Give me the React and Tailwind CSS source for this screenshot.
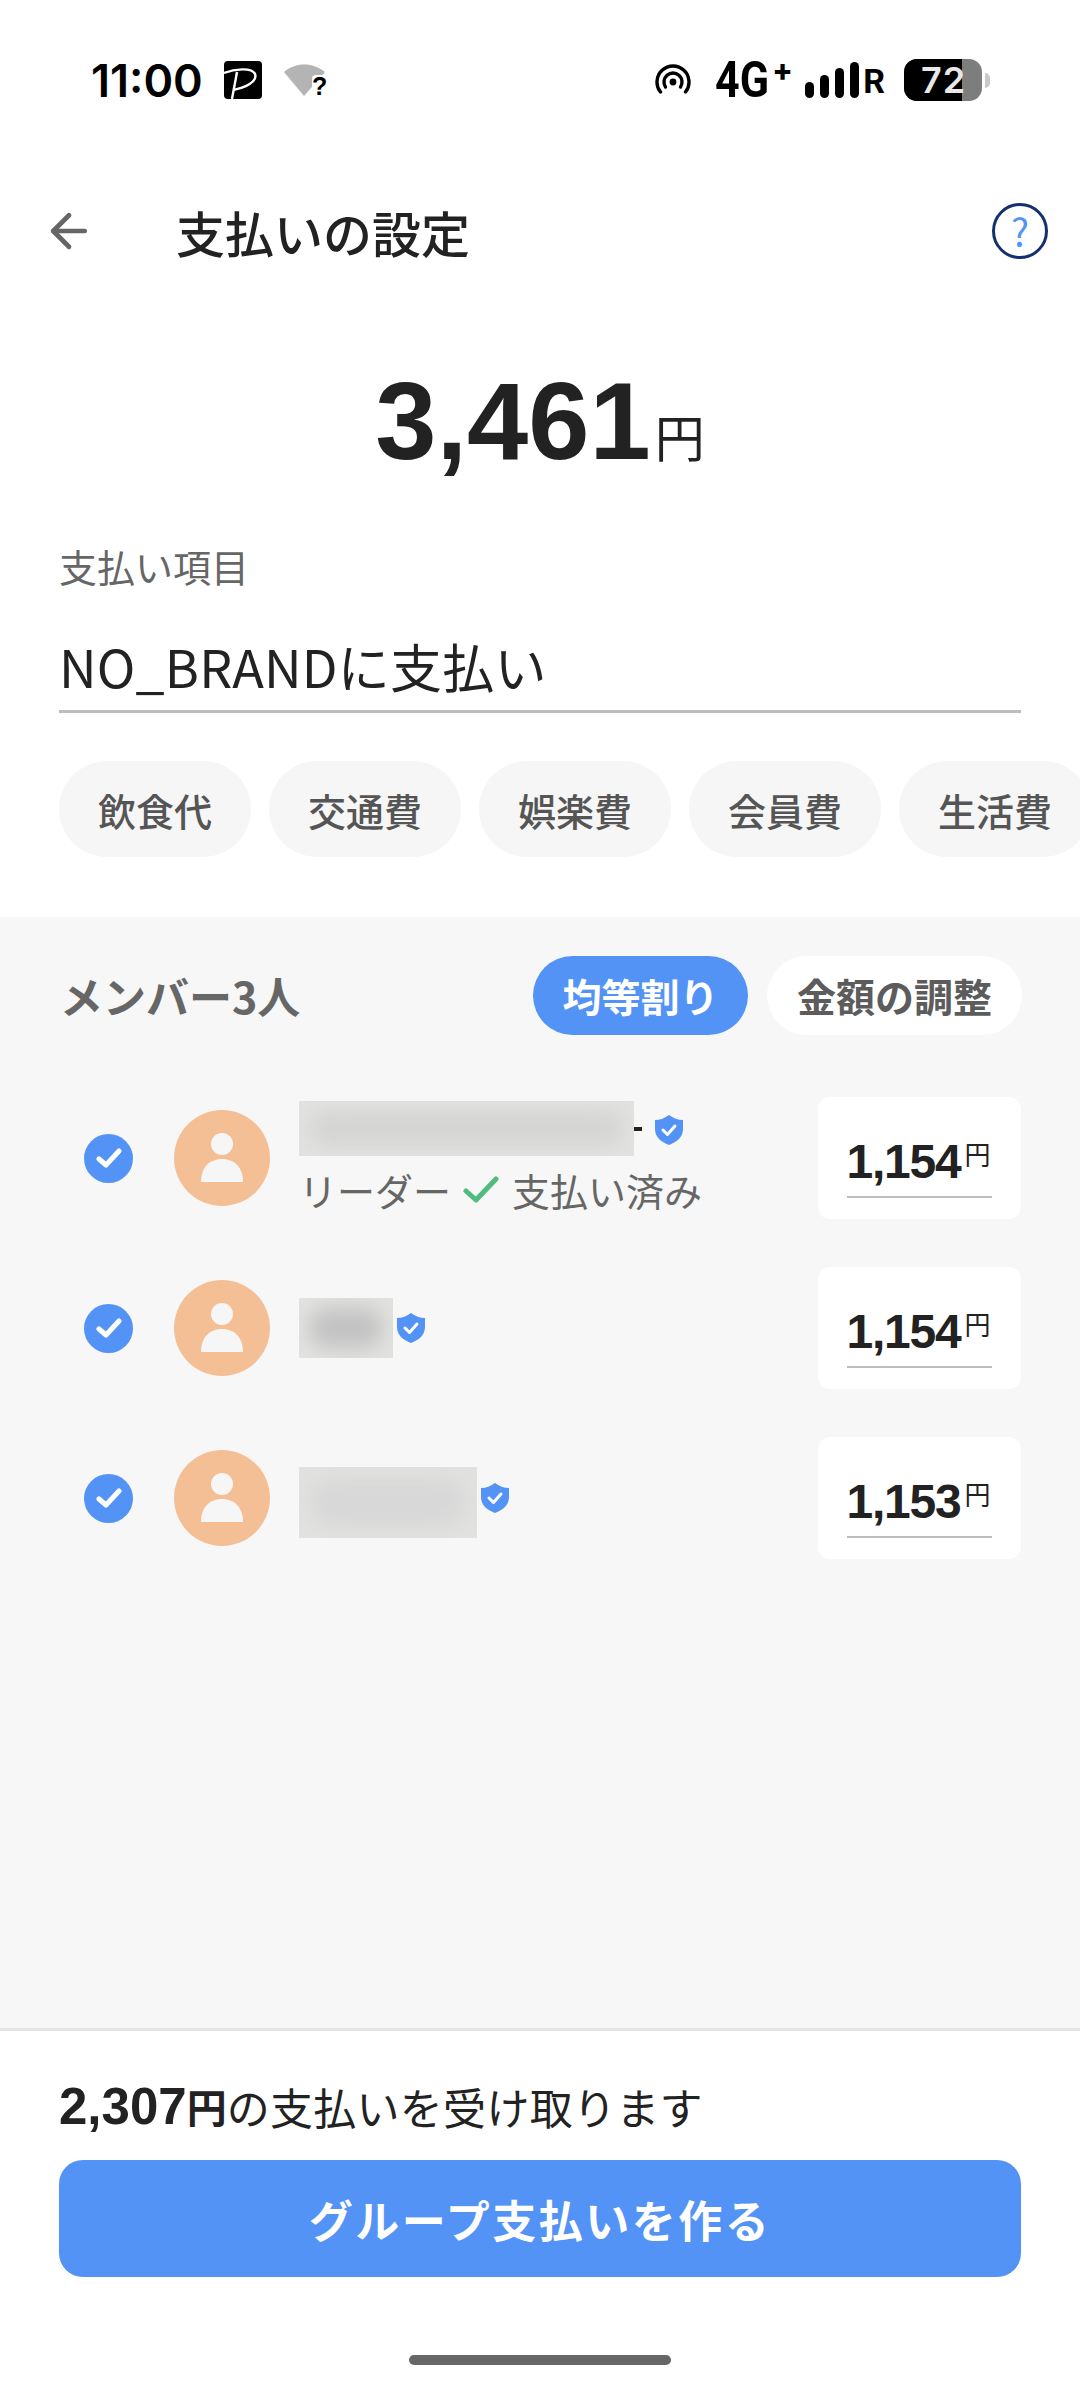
import { ArrowLeft } from 'lucide-react';

const JP = 'font-["Noto_Sans_CJK_JP","Noto_Sans",sans-serif]';

const categories = ['飲食代', '交通費', '娯楽費', '会員費', '生活費'];

const members = [
  { id: 1, amount: '1,154', nameWidth: 'w-[335px]', nameHeight: 'h-[55px]', tone: 'bg-[#d4d4d2]', leader: true },
  { id: 2, amount: '1,154', nameWidth: 'w-[94px]', nameHeight: 'h-[60px]', tone: 'bg-[#c2c2c2]' },
  { id: 3, amount: '1,153', nameWidth: 'w-[178px]', nameHeight: 'h-[71px] mt-[9px]', tone: 'bg-[#d8d8d8]' },
];

function PayPayIcon() {
  return (
    <svg width="38" height="38" viewBox="0 0 38 38">
      <rect width="38" height="38" rx="4" fill="#000" />
      <path d="M0 12 C10 8 28 6 31 13 C34 21 20 27 9 29" fill="none" stroke="#fff" strokeWidth="2.4" />
      <path d="M13 11 L8 38" fill="none" stroke="#fff" strokeWidth="2.4" />
    </svg>
  );
}

function WifiUnknown() {
  return (
    <div className="relative w-[42px] h-[34px]">
      <svg width="42" height="34" viewBox="0 0 42 34">
        <path d="M0 9 C11 -1 29 -1 41 9 L20 33 Z" fill="#b4b4b4" />
      </svg>
      <span className='absolute right-[0px] top-[12px] w-[14px] text-center bg-white rounded-[4px] font-["Liberation_Sans",sans-serif] font-bold text-[25px] leading-[22px] text-black'>?</span>
    </div>
  );
}

function Hotspot() {
  return (
    <svg width="36" height="32" viewBox="0 0 36 32" fill="none" stroke="#000" strokeWidth="3.4" strokeLinecap="round">
      <circle cx="18" cy="18" r="3.4" fill="#000" strokeWidth="0" />
      <path d="M10.5 23 A9 9 0 1 1 25.5 23" />
      <path d="M5.5 28 A16 16 0 1 1 30.5 28" />
    </svg>
  );
}

function SignalBars() {
  const bars = ['h-[16px]', 'h-[23px]', 'h-[30px]', 'h-[36px]'];
  return (
    <div className="flex items-end gap-[6px]">
      {bars.map((h) => (
        <div key={h} className={`w-[9px] rounded-full bg-black ${h}`} />
      ))}
    </div>
  );
}

function Battery() {
  return (
    <div className="flex items-center gap-[3px]">
      <div className='relative w-[78px] h-[42px] rounded-[13px] overflow-hidden bg-[#7d7d7d] flex'>
        <div className="w-[58px] h-full bg-black" />
        <span className='absolute left-[17px] top-0 font-["Inter",sans-serif] font-semibold text-[36px] leading-[42px] tracking-[1px] text-[#e8e8e8]'>72</span>
      </div>
      <div className="w-[5px] h-[15px] rounded-r-full bg-[#c9c9c9]" />
    </div>
  );
}

function StatusBar() {
  return (
    <div className='h-[160px] shrink-0 flex items-center justify-between pl-[91px] pr-[90px] font-["Inter",sans-serif] text-black'>
      <div className="flex items-center">
        <span className="text-[45px] font-semibold leading-none w-[133px]">11:00</span>
        <PayPayIcon />
        <div className="ml-[22px]"><WifiUnknown /></div>
      </div>
      <div className="flex items-center">
        <Hotspot />
        <span className='ml-[24px] w-[54px] origin-left scale-x-[0.86] font-["Roboto",sans-serif] text-[50px] font-bold leading-none whitespace-nowrap'>4G</span>
        <span className="ml-[3px] w-[14px] text-[30px] font-extrabold leading-none -mt-[20px]">+</span>
        <div className="ml-[19px]"><SignalBars /></div>
        <span className='ml-[4px] font-["Roboto",sans-serif] text-[34px] font-bold leading-none mt-[2px]'>R</span>
        <div className="ml-[19px]"><Battery /></div>
      </div>
    </div>
  );
}

function ShieldCheck() {
  return (
    <svg width="28" height="30" viewBox="0 0 28 30" className="shrink-0">
      <path d="M14 0 C18 3 23 5 28 5 L28 14 C28 22 22 27 14 30 C6 27 0 22 0 14 L0 5 C5 5 10 3 14 0 Z" fill="#5393f5" />
      <path d="M8 15 L12.5 19.5 L20 11" fill="none" stroke="#fff" strokeWidth="3" strokeLinecap="round" strokeLinejoin="round" />
    </svg>
  );
}

function CheckCircle() {
  return (
    <div className="w-[49px] h-[49px] shrink-0 rounded-full bg-[#5393f5] flex items-center justify-center">
      <svg width="26" height="22" viewBox="0 0 26 22" fill="none" stroke="#fff" strokeWidth="5" strokeLinecap="round" strokeLinejoin="round">
        <path d="M3 12 L10 18 L23 4" />
      </svg>
    </div>
  );
}

function Avatar() {
  return (
    <div className="w-[96px] h-[96px] shrink-0 rounded-full bg-[#f5bf96] flex items-center justify-center">
      <svg width="44" height="50" viewBox="0 0 44 50" fill="#f6f6f6">
        <ellipse cx="22" cy="11" rx="11" ry="11" />
        <path d="M1 49 C1 35 9 26 22 26 C35 26 43 35 43 49 Z" />
      </svg>
    </div>
  );
}

function MemberRow({ member }) {
  return (
    <div className="flex items-center h-[122px]">
      <div className="ml-[84px]"><CheckCircle /></div>
      <div className="ml-[41px]"><Avatar /></div>
      <div className="ml-[29px] flex-1 min-w-0">
        <div className="flex items-center">
          <div className={`relative overflow-hidden bg-[#e2e2e0] ${member.nameWidth} ${member.nameHeight}`}>
            <div className={`absolute inset-[10px] rounded-full blur-[10px] ${member.tone}`} />
          </div>
          {member.leader && <div className="w-[8px] h-[4px] bg-[#222]" />}
          <div className={member.leader ? 'ml-[13px] mt-[2px]' : 'ml-[4px]'}><ShieldCheck /></div>
        </div>
        {member.leader && (
          <div className="flex items-center mt-[9px] text-[38px] leading-[50px] text-[#666]">
            <span>リーダー</span>
            <svg width="36" height="28" viewBox="0 0 36 28" fill="none" stroke="#4fbb7f" strokeWidth="5" strokeLinecap="round" strokeLinejoin="round" className="ml-[12px]">
              <path d="M3 15 L13 24 L33 3" />
            </svg>
            <span className="ml-[13px]">支払い済み</span>
          </div>
        )}
      </div>
      <div className="w-[203px] h-[122px] shrink-0 mr-[59px] rounded-[12px] bg-white flex flex-col items-center">
        <div className='mt-[40px] -ml-[2px] flex items-start font-["Liberation_Sans",sans-serif]'>
          <span className="text-[48px] font-bold leading-[50px] tracking-[-1.2px] text-[#222]">{member.amount}</span>
          <span className={`ml-[4px] text-[26px] leading-[34px] text-[#222] ${JP}`}>円</span>
        </div>
        <div className="mt-[9px] w-[145px] h-[2px] bg-[#bdbdbd]" />
      </div>
    </div>
  );
}

export default function App() {
  return (
    <div className={`w-[1080px] h-[2404px] overflow-hidden bg-white flex flex-col ${JP}`}>
      <StatusBar />

      <div className="h-[142px] shrink-0 flex items-center pl-[42px] pr-[32px]">
        <ArrowLeft size={54} strokeWidth={2.1} color="#666" />
        <h1 className="ml-[80px] flex-1 text-[49px] font-medium leading-none text-[#222]">支払いの設定</h1>
        <div className="w-[56px] h-[56px] rounded-full border-[3px] border-[#15306e] flex items-center justify-center text-[38px] leading-none text-[#5393f5]">?</div>
      </div>

      <div className="h-[178px] shrink-0 flex items-end justify-center">
        <span className='font-["Liberation_Sans",sans-serif] font-bold text-[110px] leading-[118px] text-[#222]'>3,461</span>
        <span className="ml-[4px] mb-[15px] text-[50px] leading-[60px] text-[#222]">円</span>
      </div>

      <div className="px-[59px] pt-[61px] shrink-0">
        <div className="text-[38px] leading-[50px] text-[#666]">支払い項目</div>
        <div className="mt-[39px] h-[83px] border-b-[3px] border-[#bdbdbd] text-[52px] tracking-[0.2px] leading-[72px] text-[#222]">NO_BRANDに支払い</div>
      </div>

      <div className="mt-[48px] shrink-0 flex gap-[18px] pl-[59px]">
        {categories.map((c) => (
          <div key={c} className="w-[192px] h-[96px] shrink-0 rounded-[48px] bg-[#f6f6f6] flex items-center justify-center text-[38px] font-medium text-[#555]">
            {c}
          </div>
        ))}
      </div>

      <div className="mt-[60px] flex-1 min-h-0 bg-[#f7f7f7] flex flex-col">
        <div className="flex items-center pt-[39px] pl-[60px] pr-[58px]">
          <span className="flex-1 text-[43px] font-bold leading-[79px] text-[#666]">メンバー3人</span>
          <div className="w-[215px] h-[79px] rounded-full bg-[#5393f5] flex items-center justify-center text-[39px] font-bold text-white">均等割り</div>
          <div className="ml-[19px] w-[255px] h-[79px] rounded-full bg-white flex items-center justify-center text-[39px] font-bold text-[#5c5c5c]">金額の調整</div>
        </div>
        <div className="mt-[62px] flex flex-col gap-[48px]">
          {members.map((m) => (
            <MemberRow key={m.id} member={m} />
          ))}
        </div>
      </div>

      <div className="h-[376px] shrink-0 border-t-[3px] border-[#e5e5e5] flex flex-col">
        <div className="mt-[45px] ml-[59px] flex items-center h-[60px] text-[#222]">
          <span className='font-["Liberation_Sans",sans-serif] font-bold text-[51px] leading-none'>2,307</span>
          <span className="text-[40px] font-bold leading-none">円</span>
          <span className="text-[43px] tracking-[0.3px] leading-none">の支払いを受け取ります</span>
        </div>
        <button className="mt-[24px] mx-[59px] h-[117px] shrink-0 rounded-[24px] bg-[#5393f5] text-[44px] font-bold tracking-[2.5px] text-white">グループ支払いを作る</button>
        <div className="mt-[78px] self-center w-[262px] h-[10px] rounded-full bg-[#666]" />
      </div>
    </div>
  );
}
